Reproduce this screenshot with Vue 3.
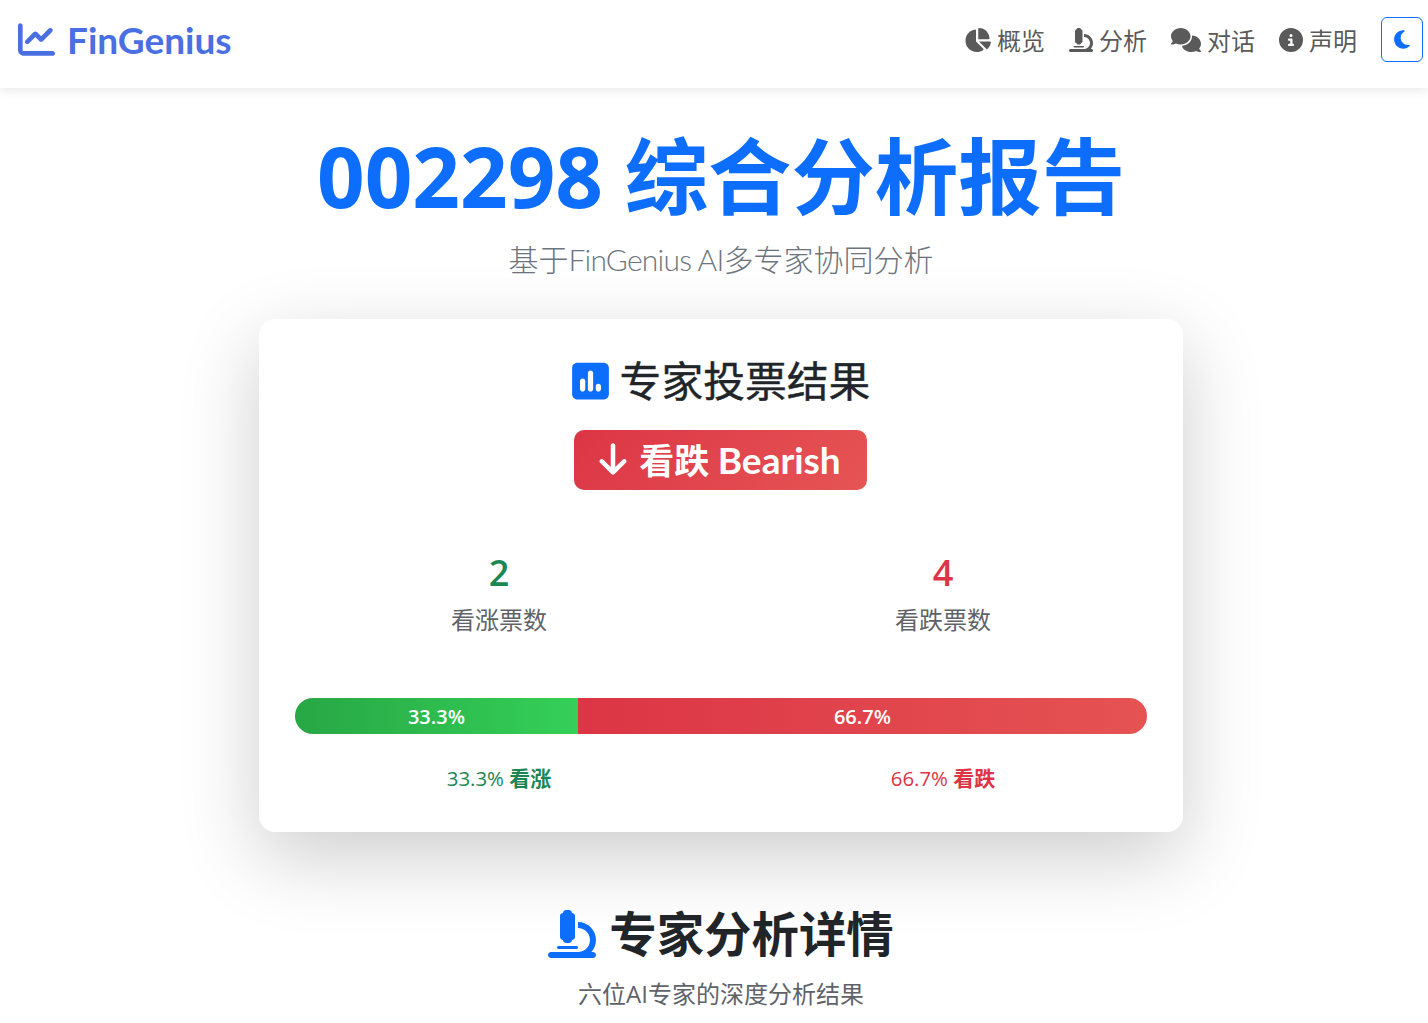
<script setup>
const navItems = [
  { label: "概览", vb: "0 0 576 512", w: 27, d: "M304 240V16.6c0-9 7-16.6 16-16.6C443.7 0 544 100.3 544 224c0 9-7.6 16-16.6 16H304zM32 272C32 150.7 122.1 50.3 239 34.3c9.2-1.3 17 6.1 17 15.4V288L412.5 444.5c6.7 6.7 6.2 17.7-1.5 23.1C371.8 495.6 323.8 512 272 512C139.5 512 32 404.6 32 272zm526.4 16c9.3 0 16.6 7.8 15.4 17c-7.7 55.9-34.6 105.6-73.9 142.3c-6 5.6-15.4 5.2-21.2-.7L320 288H558.4z" },
  { label: "分析", vb: "0 0 512 512", w: 24, d: "M160 32c0-17.7 14.3-32 32-32h32c17.7 0 32 14.3 32 32c17.7 0 32 14.3 32 32V288c0 17.7-14.3 32-32 32c0 17.7-14.3 32-32 32H192c-17.7 0-32-14.3-32-32c-17.7 0-32-14.3-32-32V64c0-17.7 14.3-32 32-32zM32 448H320c70.7 0 128-57.3 128-128s-57.3-128-128-128V128c106 0 192 86 192 192c0 49.2-18.5 94-48.9 128H480c17.7 0 32 14.3 32 32s-14.3 32-32 32H320 32c-17.7 0-32-14.3-32-32s14.3-32 32-32zm80-64H304c8.8 0 16 7.2 16 16s-7.2 16-16 16H112c-8.8 0-16-7.2-16-16s7.2-16 16-16z" },
  { label: "对话", vb: "0 0 640 512", w: 30, d: "M208 352c114.9 0 208-78.8 208-176S322.9 0 208 0S0 78.8 0 176c0 38.6 14.7 74.3 39.6 103.4c-3.5 9.4-8.7 17.7-14.2 24.7c-4.8 6.2-9.7 11-13.3 14.3c-1.8 1.6-3.3 2.9-4.3 3.7c-.5 .4-.9 .7-1.1 .8l-.2 .2 0 0 0 0C1 327.2-1.4 334.4 .8 340.9S9.1 352 16 352c21.8 0 43.8-5.6 62.1-12.5c9.2-3.5 17.8-7.4 25.3-11.4C134.1 343.3 169.8 352 208 352zM448 176c0 112.3-99.1 196.9-216.5 207C255.8 457.4 336.4 512 432 512c38.2 0 73.9-8.7 104.7-23.9c7.5 4 16 7.9 25.2 11.4c18.3 6.9 40.3 12.5 62.1 12.5c6.9 0 13.1-4.5 15.2-11.1c2.1-6.6-.2-13.8-5.8-17.9l0 0 0 0-.2-.2c-.2-.2-.6-.4-1.1-.8c-1-.8-2.5-2-4.3-3.7c-3.6-3.3-8.5-8.1-13.3-14.3c-5.5-7-10.7-15.4-14.2-24.7c24.9-29 39.6-64.7 39.6-103.4c0-92.8-84.9-168.9-192.6-175.5c.4 5.1 .6 10.3 .6 15.5z" },
  { label: "声明", vb: "0 0 512 512", w: 24, d: "M256 512A256 256 0 1 0 256 0a256 256 0 1 0 0 512zM216 336h24V272H216c-13.3 0-24-10.7-24-24s10.7-24 24-24h48c13.3 0 24 10.7 24 24v88h8c13.3 0 24 10.7 24 24s-10.7 24-24 24H216c-13.3 0-24-10.7-24-24s10.7-24 24-24zm40-208a32 32 0 1 1 0 64 32 32 0 1 1 0-64z" },
];
const microscope = navItems[1].d;
const bullish = 33.2;
</script>

<template>
  <nav class="navbar">
    <a class="brand">
      <svg class="brand-icon" viewBox="0 0 512 512"><path d="M64 64c0-17.7-14.3-32-32-32S0 46.3 0 64V400c0 44.2 35.8 80 80 80H480c17.7 0 32-14.3 32-32s-14.3-32-32-32H80c-8.8 0-16-7.2-16-16V64zm406.6 86.6c12.5-12.5 12.5-32.8 0-45.3s-32.8-12.5-45.3 0L320 210.7l-57.4-57.4c-12.5-12.5-32.8-12.5-45.3 0l-112 112c-12.5 12.5-12.5 32.8 0 45.3s32.8 12.5 45.3 0L240 221.3l57.4 57.4c12.5 12.5 32.8 12.5 45.3 0l128-128z" /></svg>
      <span>FinGenius</span>
    </a>
    <div class="nav-right">
      <a v-for="item in navItems" :key="item.label" class="nav-link">
        <svg class="nav-icon" :viewBox="item.vb" :style="{ width: item.w + 'px' }"><path :d="item.d" /></svg>
        <span>{{ item.label }}</span>
      </a>
      <button class="theme-btn">
        <svg viewBox="0 0 384 512"><path d="M223.5 32C100 32 0 132.3 0 256S100 480 223.5 480c60.6 0 115.5-24.2 155.8-63.4c5-4.9 6.3-12.5 3.1-18.7s-10.1-9.7-17-8.5c-9.8 1.7-19.8 2.6-30.1 2.6c-96.9 0-175.5-78.8-175.5-176c0-65.8 36-123.1 89.3-153.3c6.1-3.5 9.2-10.5 7.7-17.3s-7.3-11.9-14.3-12.5c-6.3-.5-12.6-.8-19-.8z" /></svg>
      </button>
    </div>
  </nav>

  <main class="page">
    <h1 class="title">002298 综合分析报告</h1>
    <p class="lead">基于<span class="lead-en">FinGenius AI</span>多专家协同分析</p>

    <section class="vote-card">
      <h2 class="vote-title">
        <svg viewBox="0 0 448 512"><path d="M64 32C28.7 32 0 60.7 0 96V416c0 35.3 28.7 64 64 64H384c35.3 0 64-28.7 64-64V96c0-35.3-28.7-64-64-64H64zm64 192c17.7 0 32 14.3 32 32v96c0 17.7-14.3 32-32 32s-32-14.3-32-32V256c0-17.7 14.3-32 32-32zm64-64c0-17.7 14.3-32 32-32s32 14.3 32 32V352c0 17.7-14.3 32-32 32s-32-14.3-32-32V160zM320 288c17.7 0 32 14.3 32 32v32c0 17.7-14.3 32-32 32s-32-14.3-32-32V320c0-17.7 14.3-32 32-32z" /></svg>
        <span>专家投票结果</span>
      </h2>
      <div class="verdict">
        <svg viewBox="0 0 384 512"><path d="M169.4 470.6c12.5 12.5 32.8 12.5 45.3 0l160-160c12.5-12.5 12.5-32.8 0-45.3s-32.8-12.5-45.3 0L224 370.8 224 64c0-17.7-14.3-32-32-32s-32 14.3-32 32l0 306.7L54.6 265.4c-12.5-12.5-32.8-12.5-45.3 0s-12.5 32.8 0 45.3l160 160z" /></svg>
        <span>看跌 <span class="verdict-en">Bearish</span></span>
      </div>

      <div class="counts">
        <div class="count">
          <div class="num green">2</div>
          <div class="count-label">看涨票数</div>
        </div>
        <div class="count">
          <div class="num red">4</div>
          <div class="count-label">看跌票数</div>
        </div>
      </div>

      <div class="bar">
        <div class="bar-up" :style="{ width: bullish + '%' }">33.3%</div>
        <div class="bar-down">66.7%</div>
      </div>

      <div class="counts legend">
        <div class="green">33.3% <b>看涨</b></div>
        <div class="red">66.7% <b>看跌</b></div>
      </div>
    </section>

    <h2 class="detail-title">
      <svg viewBox="0 0 512 512"><path :d="microscope" /></svg>
      <span>专家分析详情</span>
    </h2>
    <p class="detail-sub">六位AI专家的深度分析结果</p>
  </main>
</template>

<style scoped>
.navbar {
  height: 88px;
  display: flex;
  align-items: center;
  justify-content: space-between;
  box-sizing: border-box;
  padding: 0 5px 9px 18px;
  background: #fff;
  box-shadow: 0 2px 10px rgba(0, 0, 0, 0.1);
  position: relative;
}

.brand {
  display: flex;
  align-items: center;
  gap: 12px;
  color: #4a6fe3;
  font-family: Lato, "Noto Sans CJK SC", sans-serif;
  font-size: 37px;
  font-weight: 700;
}

.brand-icon {
  width: 37px;
  height: 37px;
  fill: #4a6fe3;
}

.nav-right {
  display: flex;
  align-items: center;
}

.nav-link {
  display: flex;
  align-items: center;
  gap: 6px;
  margin-right: 24px;
  color: #5a5a5a;
  font-size: 24px;
}

.nav-icon {
  height: 24px;
  fill: #5a5a5a;
}

.theme-btn {
  width: 42px;
  height: 45px;
  padding: 0;
  display: flex;
  align-items: center;
  justify-content: center;
  background: #fff;
  border: 1px solid #0d6efd;
  border-radius: 6px;
}

.theme-btn svg {
  width: 18px;
  height: 21px;
  fill: #0d6efd;
}

.page {
  display: flex;
  flex-direction: column;
  align-items: center;
  padding-left: 14px;
  color: #212529;
}

.title {
  margin: 33px 0 0;
  color: #0d6efd;
  font-size: 83.4px;
  font-weight: 700;
  line-height: 110px;
}

.lead {
  margin: 5px 0 0;
  color: #6c757d;
  font-family: Lato, "Noto Sans CJK SC", sans-serif;
  font-size: 30px;
  font-weight: 300;
  line-height: 46px;
}

.lead-en {
  letter-spacing: -0.75px;
}

.vote-card {
  width: 924px;
  height: 513px;
  margin-top: 37px;
  padding: 35px 36px;
  box-sizing: border-box;
  background: #fff;
  border-radius: 16px;
  box-shadow: 0 25px 80px rgba(0, 0, 0, 0.2);
  display: flex;
  flex-direction: column;
  align-items: center;
}

.vote-title {
  margin: 0;
  display: flex;
  align-items: center;
  gap: 11px;
  font-size: 41.8px;
  font-weight: 400;
  line-height: 54px;
  -webkit-text-stroke: 0.4px #212529;
}

.vote-title svg {
  width: 37px;
  height: 42px;
  fill: #0d6efd;
}

.verdict {
  margin: 22px 2px 0 0;
  width: 293px;
  height: 60px;
  box-sizing: border-box;
  padding-bottom: 3px;
  display: flex;
  align-items: center;
  justify-content: center;
  gap: 12px;
  color: #fff;
  font-family: Lato, "Noto Sans CJK SC", sans-serif;
  font-size: 35px;
  font-weight: 700;
  border-radius: 10px;
  background: linear-gradient(135deg, #dc3545, #e65555);
}

.verdict-en {
  font-size: 37px;
}

.verdict svg {
  width: 28px;
  height: 36px;
  fill: #fff;
}

.counts {
  display: grid;
  grid-template-columns: 1fr 1fr;
  width: 888px;
  margin: 0 -18px;
  text-align: center;
}

.count {
  margin-top: 60px;
}

.num {
  font-size: 36px;
  font-weight: 600;
  line-height: 46px;
}

.count-label {
  color: #5f6368;
  font-size: 24px;
  line-height: 48px;
}

.green {
  color: #198754;
}

.red {
  color: #dc3545;
}

.bar {
  width: 852px;
  height: 36px;
  margin-top: 54px;
  display: flex;
  border-radius: 18px;
  overflow: hidden;
  color: #fff;
  font-size: 20px;
  font-weight: 600;
  line-height: 38px;
  text-align: center;
}

.bar-up {
  background: linear-gradient(90deg, #28a745, #34d058);
}

.bar-down {
  flex: 1;
  background: linear-gradient(90deg, #dc3545, #e55353);
}

.legend {
  margin-top: 29px;
  font-size: 20.4px;
  line-height: 30px;
}

.legend b {
  font-size: 21px;
}

.detail-title {
  margin: 70px 0 0;
  display: flex;
  align-items: center;
  gap: 13px;
  font-size: 47.4px;
  font-weight: 700;
  line-height: 64px;
}

.detail-title svg {
  width: 48px;
  height: 48px;
  fill: #0d6efd;
}

.detail-sub {
  margin: 10px 0 0;
  color: #5f6368;
  font-size: 24px;
  line-height: 36px;
}
</style>

<style>
html,
body {
  overflow: hidden;
  background: #fff;
}

#app {
  font-family: "Open Sans", "Noto Sans CJK SC", sans-serif;
}
</style>
